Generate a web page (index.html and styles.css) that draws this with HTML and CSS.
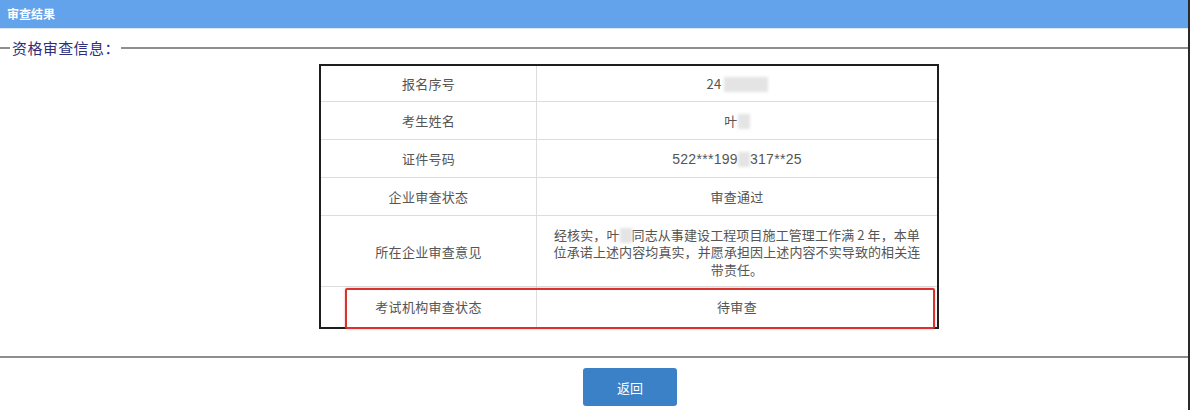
FILE: index.html
```html
<!DOCTYPE html>
<html lang="zh-CN">
<head>
<meta charset="utf-8">
<title>审查结果</title>
<link rel="stylesheet" href="styles.css">
</head>
<body>
<div class="page">
  <div class="header">审查结果</div>
  <fieldset class="info">
    <legend class="info-title">资格审查信息：</legend>
    <div class="content">
      <div class="table-wrap">
        <table class="result">
          <tr class="first">
            <td class="label">报名序号</td>
            <td class="value">24<span class="blur blur-num"></span></td>
          </tr>
          <tr>
            <td class="label">考生姓名</td>
            <td class="value">叶<span class="blur blur-char"></span></td>
          </tr>
          <tr>
            <td class="label">证件号码</td>
            <td class="value num">522***199<span class="blur blur-digit"></span>317**25</td>
          </tr>
          <tr>
            <td class="label">企业审查状态</td>
            <td class="value">审查通过</td>
          </tr>
          <tr class="multi">
            <td class="label">所在企业审查意见</td>
            <td class="value">经核实，叶<span class="blur blur-char"></span>同志从事建设工程项目施工管理工作满 2 年，本单<br>位承诺上述内容均真实，并愿承担因上述内容不实导致的相关连<br>带责任。</td>
          </tr>
          <tr class="last">
            <td class="label">考试机构审查状态</td>
            <td class="value">待审查</td>
          </tr>
        </table>
        <div class="highlight"></div>
      </div>
    </div>
  </fieldset>
  <div class="actions">
    <button class="btn-back" type="button">返回</button>
  </div>
</div>
</body>
</html>
```

FILE: styles.css
```css
html, body {
  margin: 0;
  padding: 0;
  background: #ffffff;
}

body {
  font-family: "Noto Sans CJK SC", "Liberation Sans", sans-serif;
  font-size: 13px;
  color: #555;
}

.page {
  width: 1188px;
  height: 410px;
  border-right: 2px solid #2a2a2a;
  overflow: hidden;
}

.header {
  height: 29px;
  line-height: 27px;
  background: #63a3ec;
  color: #ffffff;
  font-size: 12px;
  font-weight: bold;
  padding-left: 7px;
  border-bottom: 1px solid #d9e8f8;
  box-sizing: border-box;
}

.info {
  margin: 9px 0 0 0;
  padding: 6px 0 27px 0;
  border: none;
  border-top: 2px solid #8e8e8e;
  border-bottom: 2px solid #8e8e8e;
  padding-inline-start: 10px;
  min-width: 0;
}

.info-title {
  font-size: 15px;
  line-height: 20px;
  color: #2e2e7c;
  letter-spacing: 0.4px;
  padding: 0 1px 0 2px;
}

.content {
  display: flex;
  justify-content: center;
  padding-left: 60px;
}

.table-wrap {
  position: relative;
}

.result {
  width: 620px;
  border-collapse: separate;
  border-spacing: 0;
  border: 2px solid #1e1e1e;
  table-layout: fixed;
}

.result td {
  height: 38px;
  box-sizing: border-box;
  padding: 0 8px;
  text-align: center;
  vertical-align: middle;
  line-height: 20px;
  letter-spacing: 0.3px;
  border-bottom: 1px solid #dddddd;
  color: #555;
}

.result td.label {
  width: 216px;
  border-right: 1px solid #dddddd;
}

.result tr.first td {
  height: 36px;
}

.result tr.multi td {
  height: 71px;
  padding: 6px 4px 4px;
  line-height: 17.5px;
}

.result tr.multi td.value {
  letter-spacing: 0.1px;
}

.result tr.last td {
  border-bottom: none;
  height: 40px;
}

.num {
  font-family: "Liberation Sans", "Noto Sans CJK SC", sans-serif;
  font-size: 14px;
}

.blur {
  display: inline-block;
  background: #e4e4e4;
  filter: blur(1.5px);
  vertical-align: middle;
  height: 15px;
}

.blur-num {
  width: 44px;
  margin-left: 2px;
}

.blur-char {
  width: 12px;
}

.blur-digit {
  width: 12px;
}

.highlight {
  position: absolute;
  left: 26px;
  top: 224px;
  width: 590px;
  height: 41px;
  box-sizing: border-box;
  border: 2px solid #d8322e;
  border-radius: 2px;
  box-shadow: 0 0 2px rgba(216, 50, 46, 0.5);
  pointer-events: none;
}

.actions {
  display: flex;
  justify-content: center;
  padding-left: 72px;
  margin-top: 10px;
}

.btn-back {
  width: 94px;
  height: 38px;
  border: none;
  border-radius: 3px;
  background: #3b81c7;
  color: #ffffff;
  font-family: "Noto Sans CJK SC", sans-serif;
  font-size: 13px;
  cursor: pointer;
}
```
